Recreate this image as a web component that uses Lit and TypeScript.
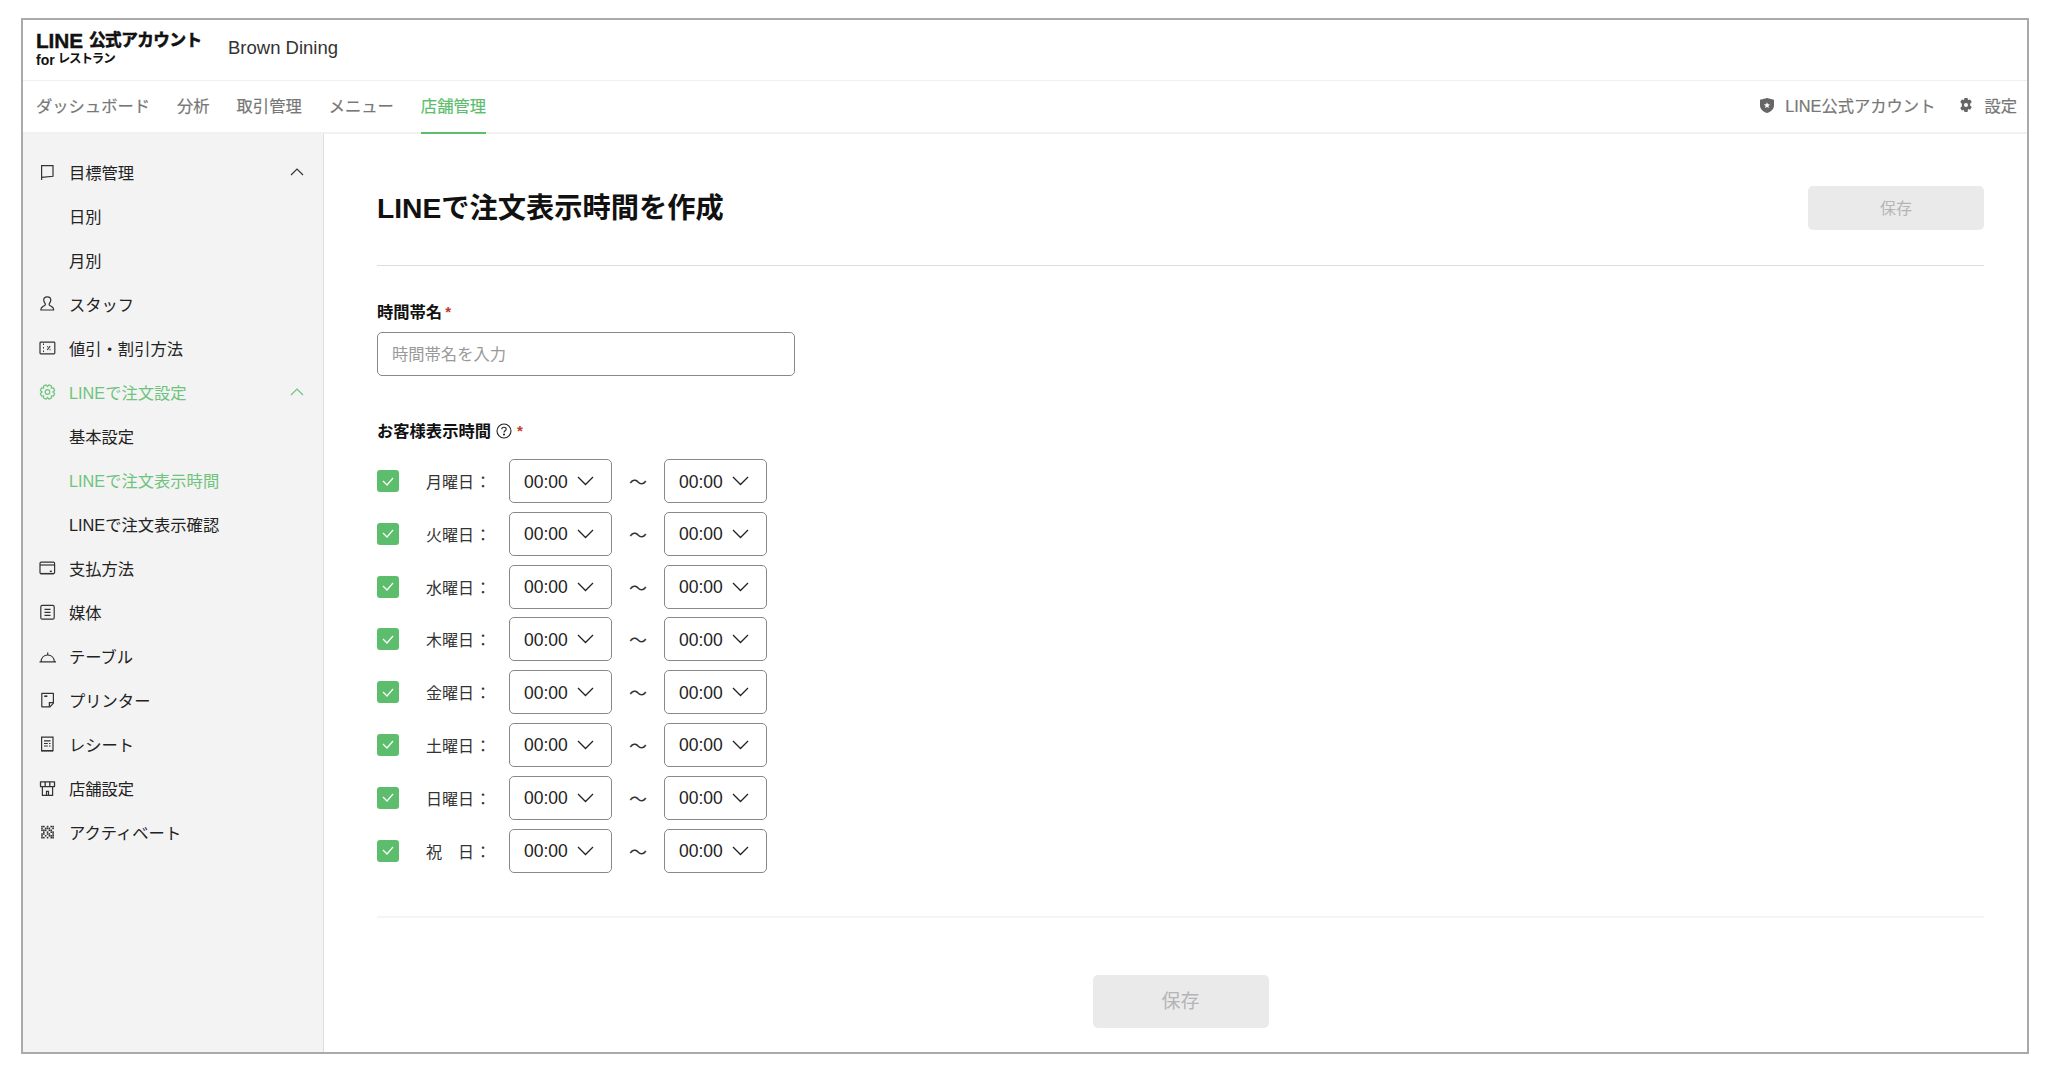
import { LitElement, html, css, svg } from "lit";
import { customElement } from "lit/decorators.js";

const ic = (c: unknown) => html`<svg class="ic" viewBox="0 0 18 18" fill="none" stroke="currentColor" stroke-width="1.2">${c}</svg>`;

function gearPath(cx: number, cy: number, ro: number, ri: number): string {
  const pts: string[] = [];
  for (let k = 0; k < 8; k++) {
    const a = (k * Math.PI) / 4 + Math.PI / 8;
    const w = 0.2;
    for (const [r, d] of [[ri, -0.39], [ro, -w], [ro, w]] as [number, number][]) {
      pts.push(`${(cx + r * Math.cos(a + d)).toFixed(2)} ${(cy + r * Math.sin(a + d)).toFixed(2)}`);
    }
  }
  return "M" + pts.join("L") + "z";
}

const qrCells = ["1101011", "1011101", "1110110", "0101011", "1101101", "1010111", "1101011"];

const icons: Record<string, unknown> = {
  flag: svg`<path d="M2.6 17V2.700H14V13.300L2.600 14.300"/>`,
  staff: svg`<path d="M8.500 1.800c2.100 0 3.300 1.500 3.300 3.300 0 2-1.700 3.100-1.700 4.300 0 1 1 1.400 2.300 2 1.500.7 2.300 1.500 2.300 3.600H1.800c0-2.100.8-2.900 2.300-3.600 1.300-.6 2.300-1 2.300-2 0-1.200-1.700-2.300-1.700-4.300 0-1.800 1.200-3.300 3.300-3.300z" stroke-linejoin="round"/>`,
  discount: svg`<rect x="1" y="3.200" width="14.800" height="11.600" rx=".8"/><path d="M4.500 4.500v1.500M4.500 8v1.500M4.500 11.500V13" stroke-width="1"/><path d="M8.200 11l3-3.800M8 7.800h1.200M10.500 10.800h1.200" stroke-width="1.100"/>`,
  gear: svg`<circle cx="8.500" cy="9" r="2.300"/><path d="${gearPath(8.5, 9, 7.3, 5.3)}" stroke-linejoin="round"/>`,
  pay: svg`<rect x="1" y="3.200" width="14.600" height="11.400" rx="1.200"/><path d="M1 6h14.600"/><path d="M10.800 12.300h2" stroke-width="1.500"/><path d="M1.600 14.600h13.400" stroke-width="1.400"/>`,
  media: svg`<rect x="1.800" y="2.400" width="13.400" height="13.800" rx="1.500"/><path d="M5.500 6.300h6M5.500 9.300h6M5.500 12.300h6"/>`,
  table: svg`<path d="M.5 14.800h16.500M2 14.800C2.300 10.800 5 8 8.700 8s6.400 2.800 6.700 6.800"/><path d="M8.700 5.500V8"/>`,
  printer: svg`<path d="M2.800 2.400h11.600v9.800L11 15.800H2.800z" stroke-linejoin="round"/><path d="M14.400 11.600h-4v4.200" stroke-width="1.300"/><path d="M5.200 5.200h3.200" stroke-width="1.600"/>`,
  receipt: svg`<path d="M2.600 2.200h11.400v13.400H2.600z"/><path d="M2.600 16.300h11.400" stroke-dasharray="1 1"/><path d="M5 5.800h6.500M5 8.500h3.800M10 8.500h1.500M5 11h3.800M10 11h1.500"/>`,
  store: svg`<path d="M1.500 2.800h14v4.800h-14z" stroke-linejoin="round" stroke-width="1.300"/><path d="M6.200 2.800v4.800M10.800 2.800v4.800" stroke-width="1.300"/><path d="M3.400 7.600v8.800h10.200V7.600"/><path d="M7.500 16.400v-4h2v4"/>`,
  qr: svg`<g fill="currentColor" stroke="none">${qrCells.flatMap((row, y) => [...row].map((c, x) => (c === "1" ? svg`<rect x="${2.2 + x * 1.85}" y="${2.8 + y * 1.85}" width="1.600" height="1.600"/>` : "")))}</g>`,
};
const chevUp = html`<svg class="chev" viewBox="0 0 14 8" fill="none" stroke="currentColor" stroke-width="1.200"><path d="M1 7l6-6 6 6"/></svg>`;

type Item = { t: string; i?: string; sub?: boolean; green?: boolean; chev?: boolean };
const items: Item[] = [
  { t: "目標管理", i: "flag", chev: true },
  { t: "日別", sub: true },
  { t: "月別", sub: true },
  { t: "スタッフ", i: "staff" },
  { t: "値引・割引方法", i: "discount" },
  { t: "LINEで注文設定", i: "gear", chev: true, green: true },
  { t: "基本設定", sub: true },
  { t: "LINEで注文表示時間", sub: true, green: true },
  { t: "LINEで注文表示確認", sub: true },
  { t: "支払方法", i: "pay" },
  { t: "媒体", i: "media" },
  { t: "テーブル", i: "table" },
  { t: "プリンター", i: "printer" },
  { t: "レシート", i: "receipt" },
  { t: "店舗設定", i: "store" },
  { t: "アクティベート", i: "qr" },
];
const days = ["月曜日", "火曜日", "水曜日", "木曜日", "金曜日", "土曜日", "日曜日", "祝\u3000日"];
const tabs = ["ダッシュボード", "分析", "取引管理", "メニュー", "店舗管理"];

@customElement("app-root")
export class AppRoot extends LitElement {
  static styles = css`
    :host { display: block; height: 1082px; background: #fff; padding: 18px 23px 28px 21px; box-sizing: border-box;
      font-family: "Liberation Sans", "Noto Sans CJK JP", sans-serif; color: #111; font-size: 16.3px; }
    .frame { height: 100%; border: 2px solid #aaa; display: flex; flex-direction: column; box-sizing: border-box; }
    .head { height: 60px; flex: none; display: flex; align-items: center; padding-left: 13px; border-bottom: 1px solid #efefef; box-sizing: content-box; }
    .logo { width: 192px; display: flex; flex-direction: column; color: #111; font-weight: 700; line-height: 1; padding-bottom: 2px; }
    .logo .a { display: flex; align-items: center; height: 20px; white-space: nowrap; }
    .logo .l { font-size: 20.8px; letter-spacing: -0.1px; margin-right: 6px; -webkit-text-stroke: 0.4px #111; }
    .logo .j { font-size: 16.6px; letter-spacing: -0.5px; -webkit-text-stroke: 0.6px #111; }
    .logo .b { display: flex; align-items: center; font-size: 14px; margin-top: 1px; white-space: nowrap; height: 14px; }
    .logo .k { font-size: 12.5px; margin-left: 3px; letter-spacing: -1.1px; }
    .brand { font-size: 18.5px; color: #333; padding-bottom: 5px; }
    .nav { height: 51px; flex: none; display: flex; align-items: stretch; padding: 0 10px 0 13px; gap: 27px; border-bottom: 2px solid #f1f1f1; color: #777; -webkit-text-stroke: 0.2px #777; }
    .tab { display: flex; align-items: center; position: relative; padding-bottom: 3px; }
    .tab.on { color: #5cbe6c; -webkit-text-stroke: 0.2px #5cbe6c; }
    .tab.on::after { content: ""; position: absolute; left: 0; right: 0; bottom: -2px; height: 2px; background: #5cbe6c; }
    .spacer { flex: 1; }
    .r { display: flex; align-items: center; gap: 11px; padding-bottom: 3px; }
    .r + .r { margin-left: -3px; }
    .r svg { width: 14px; height: 15px; fill: #666; flex: none; }
    .r svg.g { height: 14px; }
    .body { flex: 1; display: flex; min-height: 0; }
    .side { width: 300px; flex: none; background: #f3f3f3; border-right: 1px solid #ddd; padding-top: 15.500px; box-sizing: content-box; }
    .item { height: 44px; display: flex; align-items: center; padding: 0 19px 0 16px; color: #222; }
    .item.sub { padding-left: 46px; }
    .item.green { color: #6fc47d; }
    .ic { width: 18px; height: 18px; margin-right: 12px; flex: none; color: #333; }
    .green .ic { color: #6fc47d; }
    .lab { flex: 1; }
    .chev { width: 14px; height: 8px; color: #333; }
    .green .chev { color: #6fc47d; }
    .main { flex: 1; padding: 52px 43px 0 53px; min-width: 0; }
    .title { display: flex; justify-content: space-between; align-items: center; height: 44px; padding-bottom: 35px; border-bottom: 1px solid #ddd; }
    h1 { margin: 0; font-size: 28.25px; font-weight: 700; color: #111; line-height: 44px; }
    .btn { background: #eaeaea; border-radius: 5px; color: #b5b5b5; display: flex; align-items: center; justify-content: center; font-size: 16px; box-sizing: border-box; padding-bottom: 3px; }
    .btn.t { width: 176px; height: 44px; }
    .btn.b { width: 176px; height: 53px; font-size: 19px; }
    .label { font-weight: 700; color: #111; display: flex; align-items: center; line-height: 24px; }
    .star { color: #c0392b; margin-left: 3px; font-size: 15px; }
    .f1 { margin-top: 33.500px; }
    .input { margin-top: 8px; width: 418px; height: 44px; box-sizing: border-box; border: 1px solid #888; border-radius: 5px; display: flex; align-items: center; padding-left: 14px; padding-bottom: 2px; color: #999; }
    .f2 { margin-top: 43.500px; }
    .help { width: 16px; height: 16px; margin-left: 5px; margin-right: 2px; }
    .rows { margin-top: 16px; display: flex; flex-direction: column; gap: 8.800px; }
    .row { display: flex; align-items: center; height: 44px; }
    .cb { width: 22px; height: 22px; border-radius: 3px; background: #5cbe6c; display: flex; align-items: center; justify-content: center; flex: none; }
    .cb svg { width: 12px; height: 9px; }
    .day { width: 83px; margin-left: 27px; flex: none; color: #333; white-space: pre; display: flex; font-size: 16px; }
    .day i { font-style: normal; margin-left: 1px; }
    .sel { width: 103px; height: 44px; box-sizing: border-box; border: 1px solid #888; border-radius: 5px; display: flex; align-items: center; padding-left: 14px; font-size: 17.500px; color: #222; gap: 9px; flex: none; }
    .sel span { padding-top: 2px; }
    .sel svg { width: 17px; height: 10px; }
    .til { width: 52px; text-align: center; color: #333; font-size: 18px; flex: none; }
    .hr { margin-top: 43px; border-top: 2px solid #f5f5f5; }
    .foot { display: flex; justify-content: center; margin-top: 57px; }
  `;

  render() {
    const down = html`<svg viewBox="0 0 17 10" fill="none" stroke="#222" stroke-width="1.300"><path d="M1 1l7.500 7.500L16 1"/></svg>`;
    const sel = html`<div class="sel"><span>00:00</span> ${down}</div>`;
    return html`<div class="frame">
      <div class="head">
        <div class="logo">
          <div class="a"><span class="l">LINE</span><span class="j">公式アカウント</span></div>
          <div class="b">for<span class="k">レストラン</span></div>
        </div>
        <div class="brand">Brown Dining</div>
      </div>
      <div class="nav">
        ${tabs.map((t, i) => html`<div class="tab ${i === 4 ? "on" : ""}">${t}</div>`)}
        <div class="spacer"></div>
        <div class="r"><svg viewBox="0 0 14 15"><path d="M7 0l7 1.800V7.500c0 3.500-2.800 6.200-7 7.500-4.200-1.300-7-4-7-7.500V1.800z"/><path d="M7 4.300l.9 2 2.200.2-1.700 1.400.5 2.100L7 8.900 5.100 10l.5-2.100-1.700-1.400 2.200-.2z" fill="#fff"/></svg>LINE公式アカウント</div>
        <div class="r"><svg class="g" viewBox="0 0 18 18"><path d="M7 0h4l.6 2.700 2.700-.9 2.100 3.500-2.100 2v2.400l2.100 2-2.100 3.500-2.700-.9L11 18H7l-.6-2.700-2.700.9-2.100-3.500 2.100-2V7.300l-2.100-2 2.100-3.500 2.700.9z"/><circle cx="9" cy="9" r="2.600" fill="#fff"/></svg>設定</div>
      </div>
      <div class="body">
        <div class="side">
          ${items.map(it => html`<div class="item ${it.sub ? "sub" : ""} ${it.green ? "green" : ""}">
            ${it.i ? ic(icons[it.i]) : ""}<span class="lab">${it.t}</span>${it.chev ? chevUp : ""}
          </div>`)}
        </div>
        <div class="main">
          <div class="title"><h1>LINEで注文表示時間を作成</h1><div class="btn t">保存</div></div>
          <div class="label f1">時間帯名<span class="star">*</span></div>
          <div class="input">時間帯名を入力</div>
          <div class="label f2">お客様表示時間
            <svg class="help" viewBox="0 0 16 16" fill="none" stroke="#222" stroke-width="1.100"><circle cx="8" cy="8" r="7"/><path d="M5.800 6.300C5.800 5 6.800 4.300 8 4.300s2.200.8 2.200 1.900c0 1.500-2.200 1.600-2.200 3.200"/><circle cx="8" cy="11.500" r=".5" fill="#222"/></svg>
            <span class="star">*</span></div>
          <div class="rows">
            ${days.map(d => html`<div class="row">
              <div class="cb"><svg viewBox="0 0 12 9" fill="none" stroke="#fff" stroke-width="1.200"><path d="M1 4l4 4 6-7"/></svg></div>
              <div class="day">${d}<i>：</i></div>
              ${sel}<div class="til">〜</div>${sel}
            </div>`)}
          </div>
          <div class="hr"></div>
          <div class="foot"><div class="btn b">保存</div></div>
        </div>
      </div>
    </div>`;
  }
}
